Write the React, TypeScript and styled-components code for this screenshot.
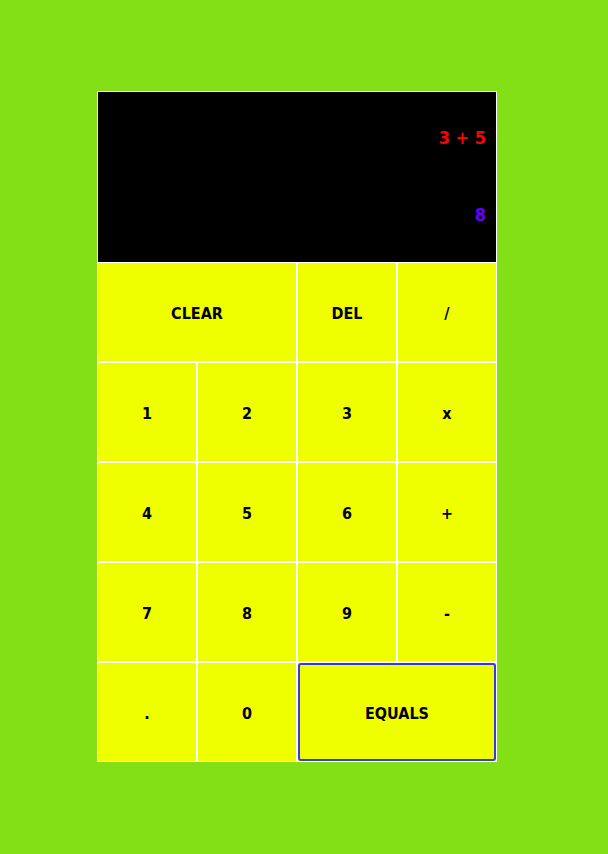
import styled, { createGlobalStyle } from 'styled-components';

const GlobalStyle = createGlobalStyle`
  html, body {
    margin: 0;
    padding: 0;
    background-color: #84e016;
  }
`;

const Page = styled.div`
  min-height: 853px;
  display: flex;
  justify-content: center;
  align-items: center;
`;

const Frame = styled.div`
  width: 414px;
`;

const Calculator = styled.div`
  width: 400px;
  font-family: 'DejaVu Sans Condensed', 'DejaVu Sans', Verdana, sans-serif;
  font-stretch: condensed;
  font-weight: bold;
`;

const Display = styled.div`
  box-sizing: border-box;
  height: 171px;
  background-color: #000;
  border: 1px solid #fff;
  border-bottom: none;
  display: flex;
  flex-direction: column;
  justify-content: space-between;
  align-items: flex-end;
  padding: 34px 10px 35px;
`;

const Line = styled.div<{ $color: string }>`
  color: ${(p) => p.$color};
  font-size: 18px;
  line-height: 24px;
`;

const Keys = styled.div`
  display: grid;
  grid-template-columns: repeat(4, 100px);
  grid-auto-rows: 100px;
`;

const Key = styled.button<{ $wide?: boolean; $focused?: boolean }>`
  position: relative;
  box-sizing: border-box;
  grid-column: ${(p) => (p.$wide ? 'span 2' : 'span 1')};
  margin: 0;
  padding: 2px 0 0;
  border: 1px solid #fff;
  background-color: #f0ff00;
  color: #000;
  font: inherit;
  font-stretch: condensed;
  font-weight: bold;
  font-size: 16px;
  cursor: pointer;

  &::after {
    content: '';
    display: ${(p) => (p.$focused ? 'block' : 'none')};
    position: absolute;
    inset: 0;
    border: 2px solid #3b3bd9;
    border-radius: 3px;
  }
`;

const keys: { label: string; wide?: boolean; focused?: boolean }[] = [
  { label: 'CLEAR', wide: true },
  { label: 'DEL' },
  { label: '/' },
  { label: '1' },
  { label: '2' },
  { label: '3' },
  { label: 'x' },
  { label: '4' },
  { label: '5' },
  { label: '6' },
  { label: '+' },
  { label: '7' },
  { label: '8' },
  { label: '9' },
  { label: '-' },
  { label: '.' },
  { label: '0' },
  { label: 'EQUALS', wide: true, focused: true },
];

export default function App() {
  return (
    <>
      <GlobalStyle />
      <Page>
        <Frame>
          <Calculator>
            <Display>
              <Line $color="#ff0000">3 + 5</Line>
              <Line $color="#6200ff">8</Line>
            </Display>
            <Keys>
              {keys.map((k) => (
                <Key key={k.label} $wide={k.wide} $focused={k.focused}>
                  {k.label}
                </Key>
              ))}
            </Keys>
          </Calculator>
        </Frame>
      </Page>
    </>
  );
}
